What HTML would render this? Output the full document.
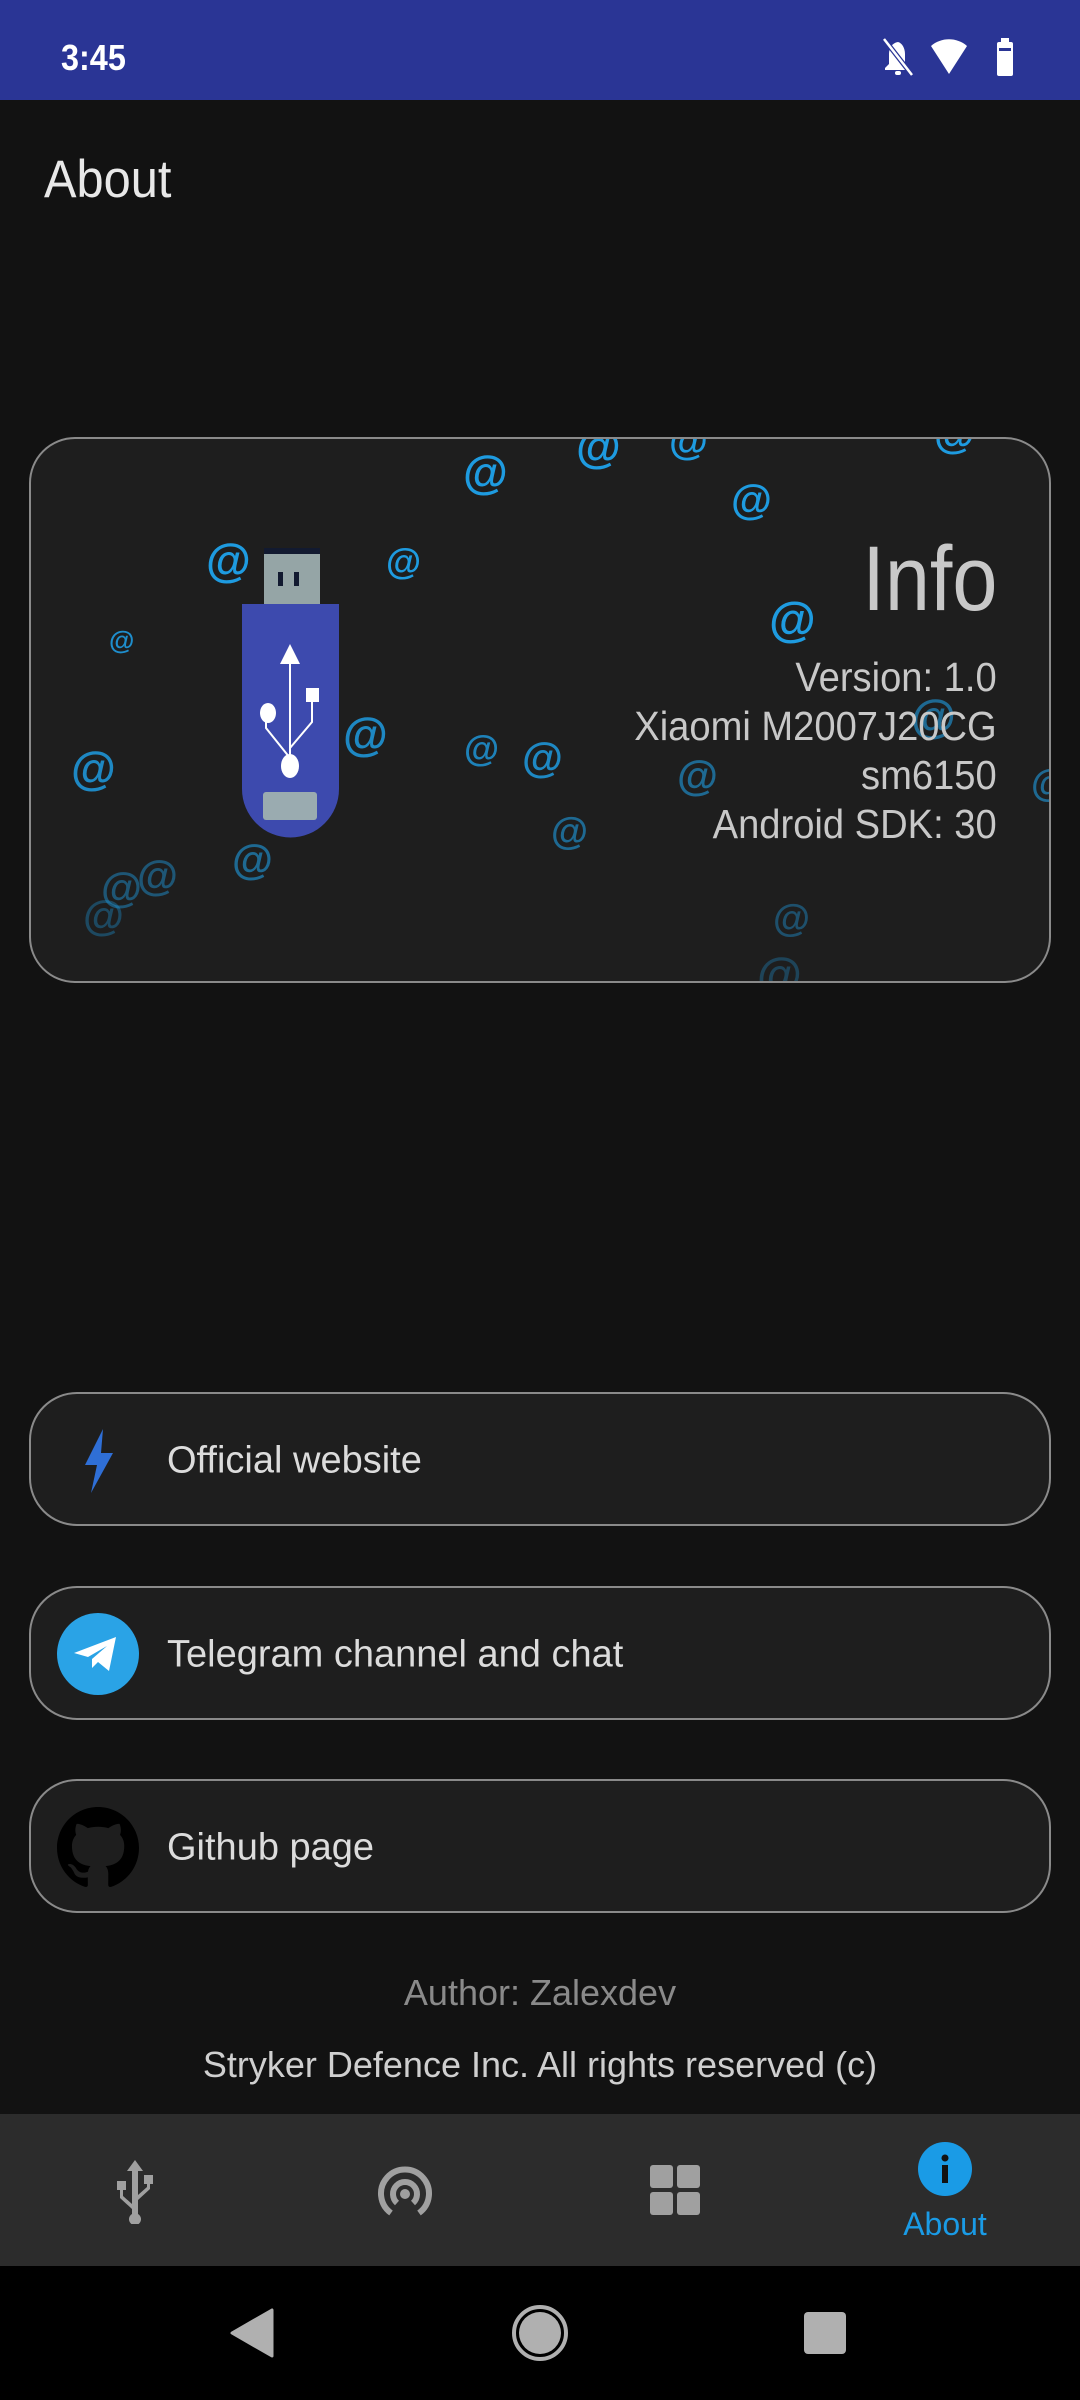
<!DOCTYPE html>
<html><head><meta charset="utf-8"><style>
*{margin:0;padding:0;box-sizing:border-box}
body{width:1080px;height:2400px;background:#121212;position:relative;overflow:hidden;font-family:"Liberation Sans",sans-serif}
.abs{position:absolute}
.sb{left:0;top:0;width:1080px;height:100px;background:#2a3595}
.card{left:29px;top:437px;width:1022px;height:546px;border:2px solid #8a8a8a;border-radius:46px;background:#1e1e1e;overflow:hidden}
.at{position:absolute;color:#1e9be0;font-weight:bold;line-height:1;margin-top:16px}
.info{position:absolute;right:52px;text-align:right;color:#c8c8c8;white-space:nowrap}
.btn{left:29px;width:1022px;height:134px;border:2px solid #8a8a8a;border-radius:48px;background:#1e1e1e}
.btn span{position:absolute;left:136px;top:50%;transform:translateY(-50%);font-size:38px;color:#dcdcdc;margin-top:2px}
.ctr{left:0;width:1080px;text-align:center}
</style></head><body>
<div class="abs sb"></div>
<div class="abs" style="left:61px;top:37px;font-size:36px;color:#fff;font-weight:bold;transform:scaleX(.9);transform-origin:left">3:45</div>
<svg class="abs" style="left:880px;top:36px" width="140" height="44" viewBox="0 0 140 44">
<g fill="#fff"><path d="M18 6c-6 1-9 6-9 12v10l-4 4v2h24v-2l-4-4V18c0-6-3-11-7-12z"/><rect x="15" y="35" width="6" height="4" rx="2"/></g>
<path d="M4 3l28 36" stroke="#2a3595" stroke-width="5"/><path d="M4 3l28 36" stroke="#fff" stroke-width="2.5"/>
<path d="M51 10c10-9 26-9 36 0L69 38z" fill="#fff"/>
<rect x="117" y="6" width="16" height="34" rx="2" fill="#fff"/><rect x="121" y="2" width="8" height="6" fill="#fff"/><rect x="119" y="12" width="12" height="3" fill="#2a3595"/>
</svg>
<div class="abs" style="left:44px;top:149px;font-size:53px;color:#e8e8e8;transform:scaleX(.92);transform-origin:left">About</div>

<div class="abs card">
<div class="at" style="left:432px;top:-6px;font-size:46px">@</div>
<div class="at" style="left:545px;top:-32px;font-size:46px">@</div>
<div class="at" style="left:638px;top:-34px;font-size:40px">@</div>
<div class="at" style="left:700px;top:24px;font-size:42px">@</div>
<div class="at" style="left:903px;top:-42px;font-size:42px">@</div>
<div class="at" style="left:175px;top:82px;font-size:46px">@</div>
<div class="at" style="left:355px;top:89px;font-size:36px">@</div>
<div class="at" style="left:78px;top:172px;font-size:26px;opacity:.9">@</div>
<div class="at" style="left:738px;top:142px;font-size:48px">@</div>
<div class="at" style="left:880px;top:238px;font-size:46px;opacity:.6">@</div>
<div class="at" style="left:312px;top:256px;font-size:46px;opacity:.85">@</div>
<div class="at" style="left:433px;top:276px;font-size:36px;opacity:.8">@</div>
<div class="at" style="left:491px;top:282px;font-size:42px;opacity:.85">@</div>
<div class="at" style="left:40px;top:290px;font-size:46px;opacity:.85">@</div>
<div class="at" style="left:646px;top:300px;font-size:42px;opacity:.6">@</div>
<div class="at" style="left:1000px;top:310px;font-size:38px;opacity:.6">@</div>
<div class="at" style="left:520px;top:358px;font-size:38px;opacity:.6">@</div>
<div class="at" style="left:201px;top:384px;font-size:42px;opacity:.6">@</div>
<div class="at" style="left:106px;top:400px;font-size:42px;opacity:.45">@</div>
<div class="at" style="left:70px;top:412px;font-size:42px;opacity:.45">@</div>
<div class="at" style="left:52px;top:440px;font-size:42px;opacity:.35">@</div>
<div class="at" style="left:742px;top:445px;font-size:38px;opacity:.4">@</div>
<div class="at" style="left:726px;top:496px;font-size:46px;opacity:.3">@</div>
<svg style="position:absolute;left:211px;top:109px" width="100" height="292" viewBox="0 0 100 292">
<rect x="22" y="0" width="56" height="8" fill="#121a30"/>
<rect x="22" y="6" width="56" height="50" fill="#95a5a6"/>
<rect x="36" y="24" width="5" height="14" fill="#121a30"/><rect x="52" y="24" width="5" height="14" fill="#121a30"/>
<path d="M0 56h97v185a48.5 48.5 0 0 1-97 0z" fill="#3d4aae"/>
<rect x="21" y="244" width="54" height="28" rx="3" fill="#9aabb0"/>
<g stroke="#fff" stroke-width="2" fill="none"><path d="M48 100v120"/><path d="M48 210l-24-30v-16"/><path d="M48 200l22-26v-26"/></g>
<path d="M48 96l-10 20h20z" fill="#fff"/>
<ellipse cx="26" cy="165" rx="8" ry="10" fill="#fff"/><rect x="64" y="140" width="13" height="14" fill="#fff"/>
<ellipse cx="48" cy="218" rx="9" ry="12" fill="#fff"/>
</svg>
<div class="info" style="top:88px;font-size:92px;transform:scaleX(.88);transform-origin:right">Info</div>
<div class="info" style="top:214px;font-size:41px;line-height:49px;transform:scaleX(.93);transform-origin:right">Version: 1.0<br>Xiaomi M2007J20CG<br>sm6150<br>Android SDK: 30</div>
</div>

<div class="abs btn" style="top:1392px">
<svg style="position:absolute;left:50px;top:35px" width="36" height="64" viewBox="0 0 36 64"><path d="M22 0L4 36h12L10 64 32 24H20z" fill="#2f6fd6"/></svg>
<span>Official website</span></div>
<div class="abs btn" style="top:1586px">
<svg style="position:absolute;left:26px;top:24px" width="82" height="84" viewBox="0 0 82 84"><circle cx="41" cy="42" r="41" fill="#2aa3e6"/><path d="M17 41l42-16-7 34-11-9-6 6v-9l15-13-19 11z" fill="#fff"/></svg>
<span>Telegram channel and chat</span></div>
<div class="abs btn" style="top:1779px">
<svg style="position:absolute;left:26px;top:25px" width="82" height="84" viewBox="0 0 16 16"><path fill="#000" d="M8 0C3.58 0 0 3.58 0 8c0 3.540 2.290 6.530 5.470 7.590.4.07.55-.17.55-.38 0-.19-.01-.82-.01-1.490-2.010.37-2.530-.49-2.690-.94-.09-.23-.48-.94-.82-1.130-.28-.15-.68-.52-.01-.53.63-.01 1.080.58 1.230.82.72 1.210 1.870.87 2.330.66.07-.52.28-.87.51-1.070-1.780-.2-3.640-.89-3.640-3.950 0-.87.31-1.590.82-2.150-.08-.2-.36-1.020.08-2.120 0 0 .67-.21 2.200.82.64-.18 1.320-.27 2-.27.68 0 1.360.09 2 .27 1.530-1.040 2.200-.82 2.200-.82.44 1.100.16 1.920.08 2.120.51.56.82 1.270.82 2.150 0 3.070-1.870 3.750-3.650 3.950.29.25.54.73.54 1.480 0 1.070-.01 1.930-.01 2.200 0 .21.15.46.55.38A8.013 8.013 0 0016 8c0-4.420-3.580-8-8-8z"/></svg>
<span>Github page</span></div>

<div class="abs ctr" style="top:1972px;font-size:36px;color:#8a8a8a">Author: Zalexdev</div>
<div class="abs ctr" style="top:2044px;font-size:36px;color:#cfcfcf">Stryker Defence Inc. All rights reserved (c)</div>

<div class="abs" style="left:0;top:2114px;width:1080px;height:152px;background:#2c2c2c"></div>
<svg class="abs" style="left:112px;top:2160px" width="46" height="64" viewBox="0 0 46 64"><g fill="#a0a0a0"><path d="M23 0l-8 11h5v33l-9-8v-6h3v-9H5v9h3v8l12 11v5a6 6 0 1 0 6 0V40l12-11v-5h3v-9h-9v9h3v3l-9 8V11h5z"/></g></svg>
<svg class="abs" style="left:377px;top:2163px" width="56" height="56" viewBox="0 0 56 56"><g fill="none" stroke="#a0a0a0" stroke-width="6"><path d="M14 50A24 24 0 1 1 42 50"/><path d="M20 40A12 12 0 1 1 36 40"/></g><circle cx="28" cy="31" r="5" fill="#a0a0a0"/></svg>
<svg class="abs" style="left:650px;top:2165px" width="50" height="50" viewBox="0 0 50 50"><g fill="#a0a0a0"><rect x="0" y="0" width="23" height="23" rx="3"/><rect x="27" y="0" width="23" height="23" rx="3"/><rect x="0" y="27" width="23" height="23" rx="3"/><rect x="27" y="27" width="23" height="23" rx="3"/></g></svg>
<svg class="abs" style="left:917px;top:2141px" width="56" height="56" viewBox="0 0 56 56"><circle cx="28" cy="28" r="27" fill="#1a9be6"/><rect x="25" y="24" width="6" height="18" fill="#121212"/><circle cx="28" cy="17" r="3.5" fill="#121212"/></svg>
<div class="abs" style="left:880px;top:2206px;width:130px;text-align:center;font-size:32px;color:#1a9be6">About</div>

<div class="abs" style="left:0;top:2266px;width:1080px;height:134px;background:#000"></div>
<svg class="abs" style="left:230px;top:2308px" width="44" height="50" viewBox="0 0 44 50"><path d="M42 2v46L2 25z" fill="#b0b0b0" stroke="#b0b0b0" stroke-width="3" stroke-linejoin="round"/></svg>
<svg class="abs" style="left:511px;top:2304px" width="58" height="58" viewBox="0 0 58 58"><circle cx="29" cy="29" r="26" fill="none" stroke="#b0b0b0" stroke-width="4"/><circle cx="29" cy="29" r="21" fill="#b0b0b0"/></svg>
<div class="abs" style="left:804px;top:2312px;width:42px;height:42px;background:#b0b0b0;border-radius:4px"></div>
</body></html>
